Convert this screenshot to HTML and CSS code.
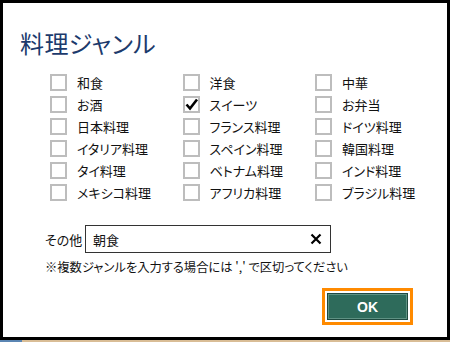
FILE: index.html
```html
<!DOCTYPE html>
<html lang="ja">
<head>
    <meta charset="UTF-8">
    <meta name="viewport" content="width=device-width, initial-scale=1.0">
    <title>料理ジャンル</title>
    <link rel="stylesheet" href="styles.css">
</head>
<body>
    <div class="window">
        <h1 class="dialog-title">料理ジャンル</h1>

        <div class="genre-grid">
            <label class="genre"><span class="box"></span>和食</label>
            <label class="genre"><span class="box"></span>洋食</label>
            <label class="genre"><span class="box"></span>中華</label>

            <label class="genre"><span class="box"></span>お酒</label>
            <label class="genre">
                <span class="box checked">
                    <svg viewBox="0 0 17 17" width="17" height="17"><polyline points="3.5,8.5 7,12.5 14,3.5" fill="none" stroke="#000" stroke-width="2.6"/></svg>
                </span>スイーツ
            </label>
            <label class="genre"><span class="box"></span>お弁当</label>

            <label class="genre"><span class="box"></span>日本料理</label>
            <label class="genre"><span class="box"></span>フランス料理</label>
            <label class="genre"><span class="box"></span>ドイツ料理</label>

            <label class="genre"><span class="box"></span>イタリア料理</label>
            <label class="genre"><span class="box"></span>スペイン料理</label>
            <label class="genre"><span class="box"></span>韓国料理</label>

            <label class="genre"><span class="box"></span>タイ料理</label>
            <label class="genre"><span class="box"></span>ベトナム料理</label>
            <label class="genre"><span class="box"></span>インド料理</label>

            <label class="genre"><span class="box"></span>メキシコ料理</label>
            <label class="genre"><span class="box"></span>アフリカ料理</label>
            <label class="genre"><span class="box"></span>ブラジル料理</label>
        </div>

        <div class="other-row">
            <span class="other-label">その他</span>
            <div class="other-input">
                <span class="other-value">朝食</span>
                <svg class="clear-icon" viewBox="0 0 12 12" width="12" height="12"><path d="M1.5 1.5 L10.5 10.5 M10.5 1.5 L1.5 10.5" stroke="#000" stroke-width="2.2" fill="none"/></svg>
            </div>
        </div>
        <p class="note">※複数ジャンルを入力する場合には ',' で区切ってください</p>

        <div class="actions">
            <div class="focus-ring">
                <button class="ok-btn">OK</button>
            </div>
        </div>
    </div>
    <div class="desktop-strip"></div>
</body>
</html>
```

FILE: styles.css
```css
* {
    margin: 0;
    padding: 0;
    box-sizing: border-box;
}

body {
    width: 450px;
    height: 342px;
    overflow: hidden;
    background-color: #d9bd96;
    font-family: "Noto Sans CJK JP", "Noto Sans", sans-serif;
    font-feature-settings: "palt";
    color: #111;
}

.window {
    width: 450px;
    height: 340px;
    background-color: #fff;
    border: 3px solid #000;
    padding: 0 0 0 17px;
}

.dialog-title {
    font-size: 24px;
    font-weight: 400;
    color: #1c3a6c;
    line-height: 30px;
    margin-top: 25px;
    letter-spacing: 0.4px;
}

.genre-grid {
    display: grid;
    grid-template-columns: repeat(3, 132.5px);
    grid-auto-rows: 22px;
    margin-top: 13px;
    margin-left: 30px;
}

.genre {
    display: flex;
    align-items: center;
    gap: 10px;
    font-size: 13px;
}

.box {
    width: 17px;
    height: 17px;
    border: 2px solid #bdbdbd;
    background-color: #fff;
    position: relative;
}

.box svg {
    position: absolute;
    top: -2px;
    left: -2px;
}

.other-row {
    display: flex;
    align-items: center;
    margin-top: 22px;
    margin-left: 25px;
}

.other-label {
    font-size: 13px;
    width: 40px;
}

.other-input {
    width: 246px;
    height: 28px;
    border: 1px solid #333;
    display: flex;
    align-items: center;
    justify-content: space-between;
    padding: 0 8px 0 7px;
    font-size: 13px;
}

.note {
    font-size: 12.3px;
    margin-top: 4px;
    margin-left: 25px;
    line-height: 20px;
}

.actions {
    display: flex;
    justify-content: flex-end;
    margin-top: 11px;
    margin-right: 34px;
}

.focus-ring {
    border: 3px solid #ff8a00;
    padding: 2px;
    background-color: #fff;
}

.ok-btn {
    display: block;
    width: 81px;
    height: 27px;
    background-color: #2e6b5b;
    border: 1px solid #1f4a3f;
    box-shadow: inset 0 0 0 1px #5f9284;
    color: #fff;
    font-family: "Liberation Sans", Arial, sans-serif;
    font-weight: bold;
    font-size: 14px;
}

.desktop-strip {
    height: 2px;
    background: linear-gradient(to right, #5b86b3 0, #5b86b3 22px, #d9bd96 22px);
}
```
